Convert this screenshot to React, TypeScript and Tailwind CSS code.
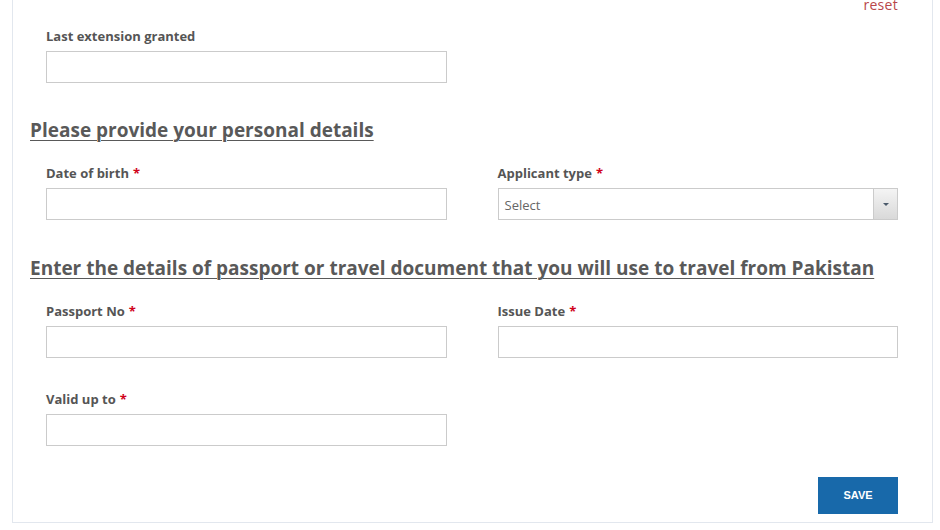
const font = { fontFamily: '"Open Sans", "Liberation Sans", sans-serif' };

function Field({ label, required, children }: { label: string; required?: boolean; children?: React.ReactNode }) {
  return (
    <div className="flex flex-col">
      <label className="text-[13px] leading-[18px] font-bold text-[#555555]">
        {label}
        {required && <span className="text-[#d0021b] ml-1">*</span>}
      </label>
      <div className="mt-[6px]">
        {children ?? <input className="block w-full h-[32px] border border-[#cbcbcb] bg-white px-2 outline-none" />}
      </div>
    </div>
  );
}

function SelectBox() {
  return (
    <div className="flex h-[32px] border border-[#cbcbcb] bg-white">
      <div className="flex-1 flex items-center pt-[3px] px-[6px] text-[13px] text-[#666666]">Select</div>
      <div className="w-[24px] flex items-center justify-center border-l border-[#cbcbcb] bg-gradient-to-b from-[#f4f4f4] to-[#d9d9d9]">
        <svg width="6" height="3" viewBox="0 0 6 3">
          <path d="M0 0h6L3 3z" fill="#4b5a6b" />
        </svg>
      </div>
    </div>
  );
}

export default function App() {
  return (
    <div className="h-[530px] overflow-hidden bg-white" style={font}>
      <div className="ml-[12px] w-[921px] -mt-[5px] border-x border-b border-[#e2e7ee] pb-[8px]">
        <div className="flex justify-end pr-[34px]">
          <a className="text-[14px] leading-[20px] tracking-[0.3px] text-[#b8474a]">reset</a>
        </div>

        <div className="pl-[33px] pr-[34px] mt-[12px] grid grid-cols-2 gap-x-[51px]">
          <Field label="Last extension granted" />
        </div>

        <h2 className="pl-[17px] mt-[33px] text-[19px] leading-[28px] font-bold text-[#595959] underline underline-offset-[3px] decoration-[1px]">
          Please provide your personal details
        </h2>

        <div className="pl-[33px] pr-[34px] mt-[20px] grid grid-cols-2 gap-x-[51px]">
          <Field label="Date of birth" required />
          <Field label="Applicant type" required>
            <SelectBox />
          </Field>
        </div>

        <h2 className="pl-[17px] mt-[34px] text-[19px] leading-[28px] font-bold text-[#595959] underline underline-offset-[3px] decoration-[1px]">
          Enter the details of passport or travel document that you will use to travel from Pakistan
        </h2>

        <div className="pl-[33px] pr-[34px] mt-[20px] grid grid-cols-2 gap-x-[51px] gap-y-[32px]">
          <Field label="Passport No" required />
          <Field label="Issue Date" required />
          <Field label="Valid up to" required />
        </div>

        <div className="flex justify-end pr-[34px] mt-[31px]">
          <button className="w-[80px] h-[37px] bg-[#1869aa] text-white text-[11px] font-bold" style={{ fontFamily: '"Liberation Sans", Arial, sans-serif' }}>
            SAVE
          </button>
        </div>
      </div>
    </div>
  );
}
